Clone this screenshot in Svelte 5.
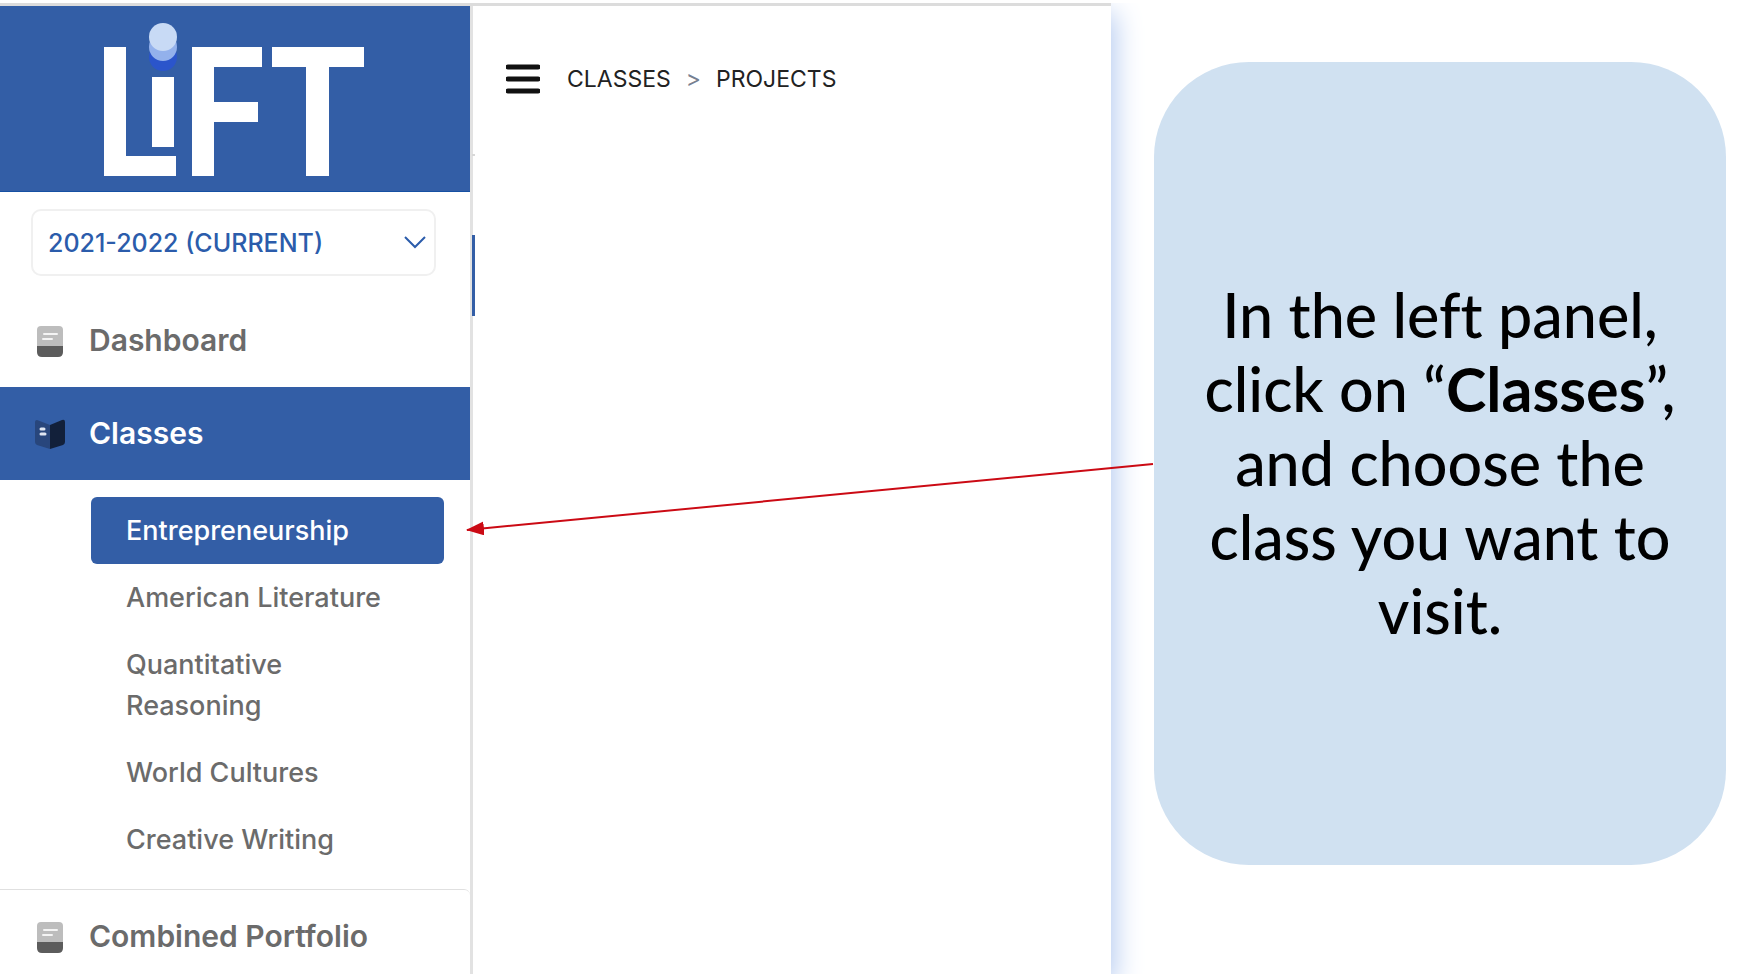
<script>
  const classes = [
    'Entrepreneurship',
    'American Literature',
    'Quantitative Reasoning',
    'World Cultures',
    'Creative Writing'
  ];
  let selected = $state('Entrepreneurship');
  let year = $state('2021-2022');
</script>

{#snippet notebook()}
  <svg class="icon" viewBox="0 0 32 34" aria-hidden="true">
    <path d="M4 22V6q0-4 4-4h18q4 0 4 4v16z" fill="#bdbdbd" />
    <path d="M4 22h26v6q0 5-5 5H9q-5 0-5-5z" fill="#5c5c5c" />
    <path d="M11 10h13M10 15h9" stroke="#f4f4f4" stroke-width="2" stroke-linecap="round" />
  </svg>
{/snippet}

<div class="page">
  <div class="app">
    <aside class="sidebar">
      <header class="brand">
        <svg class="logo" viewBox="0 0 260 153" role="img" aria-label="LiFT">
          <circle cx="59" cy="34" r="14" fill="#2b55cb" />
          <circle cx="59" cy="24" r="14" fill="#93b1ec" />
          <circle cx="59" cy="14" r="14" fill="#c8daf5" />
          <path
            fill="#fff"
            d="M0 24h22v109h50v20H0zM48 54h22v70H48zM88 24h70v20h-48v35h44v20h-44v54H88zM168 24h92v20h-35v109h-23V44h-34z"
          />
        </svg>
      </header>

      <div class="year">
        <select aria-label="School year" bind:value={year}>
          <option value="2021-2022">2021-2022 (CURRENT)</option>
        </select>
        <svg class="chevron" viewBox="0 0 22 14" aria-hidden="true">
          <path d="M1 2l10 10 10-10" fill="none" stroke="#2b5cab" stroke-width="2" />
        </svg>
      </div>

      <nav>
        <a class="row" href="#dashboard">{@render notebook()}Dashboard</a>
        <a class="row active" href="#classes">
          <svg class="icon" viewBox="0 0 32 34" aria-hidden="true">
            <path d="M2 5q0-2 2-2l13 5v24L4 28q-2-1-2-3z" fill="#28467c" />
            <path d="M17 8l12-5q3-1 3 2v20q0 2-2 3l-13 4z" fill="#12203a" />
            <path d="M8 12h3M8 17h4" stroke="#dfe6f2" stroke-width="3" stroke-linecap="round" />
          </svg>
          Classes
        </a>
        <ul>
          {#each classes as name}
            <li>
              <button class:selected={selected === name} onclick={() => (selected = name)}>{name}</button>
            </li>
          {/each}
        </ul>
        <a class="row last" href="#portfolio">{@render notebook()}Combined Portfolio</a>
      </nav>
    </aside>

    <main>
      <div class="topbar">
        <button class="menu" aria-label="Toggle menu">
          <svg viewBox="0 0 34 30" aria-hidden="true">
            <path d="M2 3h30M2 15h30M2 27h30" stroke="#111" stroke-width="5" stroke-linecap="round" />
          </svg>
        </button>
        <div class="crumbs">
          <a href="#classes">CLASSES</a>
          <span class="sep">&gt;</span>
          <a href="#projects">PROJECTS</a>
        </div>
      </div>
      <span class="edge-line"></span>
      <span class="edge-tab"></span>
      <svg class="arrow" aria-hidden="true">
        <defs>
          <marker id="head" viewBox="0 0 18 14" refX="1" refY="7" markerWidth="18" markerHeight="14" markerUnits="userSpaceOnUse" orient="auto">
            <path d="M0 7L18 0v14z" fill="#cb0a14" />
          </marker>
        </defs>
        <line x1="1" y1="74" x2="100%" y2="8" stroke="#cb0a14" stroke-width="2" marker-start="url(#head)" />
      </svg>
    </main>
  </div>

  <section class="side">
    <p class="callout"><span>In the left panel, click on “<strong>Classes</strong>”, and choose the class you want to visit.</span></p>
  </section>
</div>

<style>
  :global(body) {
    margin: 0;
    background: #fff;
  }
  .page {
    display: flex;
    min-height: 100vh;
    overflow: hidden;
    font-family: Inter, 'Liberation Sans', sans-serif;
    font-variant-ligatures: none;
  }
  .app {
    flex: 1;
    display: flex;
    box-sizing: border-box;
    border-top: 3px solid #dcdcdc;
    margin-top: 3px;
    background: #fff;
    box-shadow: 4px 10px 26px #b4caf0;
    clip-path: inset(0 -43px 0 0);
  }
  .sidebar {
    flex: none;
    width: 470px;
    border-right: 3px solid #e2e2e2;
  }
  .brand {
    display: flex;
    justify-content: center;
    box-sizing: border-box;
    height: 186px;
    padding: 17px 2px 0 0;
    background: #335ea6;
    border-bottom: 1px solid #1650a3;
  }
  .logo {
    width: 260px;
    height: 153px;
  }
  .year {
    position: relative;
    margin: 17px 34px 18px 31px;
  }
  select {
    appearance: none;
    display: block;
    width: 100%;
    height: 67px;
    padding: 0 48px 0 15px;
    border: 2px solid #f0f0f0;
    border-radius: 10px;
    background: #fff;
    color: #2b5cab;
    font: 500 25px Inter, 'Liberation Sans', sans-serif;
  }
  .chevron {
    position: absolute;
    right: 10px;
    top: 26px;
    width: 22px;
    height: 14px;
    pointer-events: none;
  }
  .row {
    display: flex;
    align-items: center;
    gap: 24px;
    padding: 26px 33px;
    color: #6b6b6b;
    font-size: 30px;
    font-weight: 600;
    line-height: 41px;
    text-decoration: none;
  }
  .icon {
    flex: none;
    width: 32px;
    height: 34px;
  }
  .active {
    background: #335ea6;
    color: #fff;
  }
  .last {
    padding-bottom: 15px;
    border-top: 1px solid #e0e0e0;
    border-top-right-radius: 6px;
  }
  ul {
    list-style: none;
    margin: 0;
    padding: 17px 26px 16px 91px;
  }
  li button {
    display: block;
    width: 100%;
    padding: 13px 35px;
    border: 0;
    border-radius: 6px;
    background: none;
    color: #6b6b6b;
    font: 500 27px/41px Inter, 'Liberation Sans', sans-serif;
    text-align: left;
  }
  li button.selected {
    background: #335ea6;
    color: #fff;
  }
  main {
    position: relative;
    flex: 1;
  }
  .topbar {
    display: flex;
    align-items: center;
    gap: 27px;
    padding: 53px 33px;
  }
  .menu {
    padding: 0;
    border: 0;
    background: none;
  }
  .menu svg {
    display: block;
    width: 34px;
    height: 30px;
  }
  .crumbs {
    display: flex;
    gap: 15px;
    font-size: 23px;
    line-height: 40px;
  }
  .crumbs a {
    color: #222;
    text-decoration: none;
  }
  .sep {
    color: #768090;
  }
  .edge-line,
  .edge-tab {
    position: absolute;
    left: -1px;
    width: 3px;
  }
  .edge-line {
    top: 148px;
    height: 2px;
    background: #d8d8d8;
  }
  .edge-tab {
    top: 229px;
    height: 81px;
    background: #335ea6;
  }
  .arrow {
    position: absolute;
    left: -7px;
    top: 450px;
    width: calc(100% + 49px);
    height: 90px;
    overflow: visible;
  }
  .side {
    box-sizing: border-box;
    width: 639px;
    flex: 0 1 639px;
    padding: 62px 24px 62px 43px;
  }
  .callout {
    display: flex;
    align-items: center;
    box-sizing: border-box;
    min-height: 803px;
    margin: 0;
    padding: 0 40px 2px;
    border-radius: 95px;
    background: #d0e1f1;
    color: #000;
    font: 500 61px/74px Lato, 'Liberation Sans', sans-serif;
    font-variant-ligatures: none;
    text-align: center;
  }
  .callout span {
    width: 100%;
  }
</style>
